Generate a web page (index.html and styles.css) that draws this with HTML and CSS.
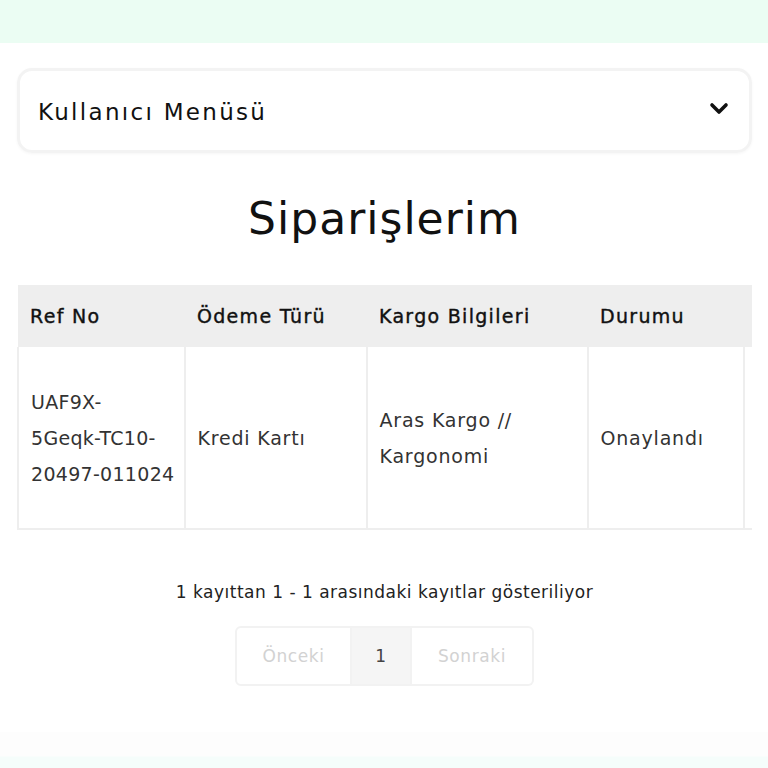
FILE: index.html
```html
<!DOCTYPE html>
<html lang="tr">
<head>
    <meta charset="utf-8">
    <title>Siparişlerim</title>
    <link rel="stylesheet" href="styles.css">
</head>
<body>
    <div class="top-band"></div>

    <div class="page">
        <!-- Kullanici menusu -->
        <div class="user-menu">
            <span class="user-menu-title">Kullanıcı Menüsü</span>
            <svg class="chevron" width="20" height="14" viewBox="0 0 20 14">
                <path d="M3 3 L10 10 L17 3" fill="none" stroke="#111" stroke-width="3.6" stroke-linecap="round" stroke-linejoin="round"/>
            </svg>
        </div>

        <h1 class="page-title">Siparişlerim</h1>

        <!-- Siparis tablosu -->
        <div class="table-wrap">
            <table class="orders">
                <thead>
                    <tr>
                        <th class="col-ref">Ref No</th>
                        <th class="col-pay">Ödeme Türü</th>
                        <th class="col-cargo">Kargo Bilgileri</th>
                        <th class="col-status">Durumu</th>
                        <th class="col-detail"></th>
                    </tr>
                </thead>
                <tbody>
                    <tr>
                        <td>UAF9X-<br>5Geqk-TC10-<br>20497-011024</td>
                        <td>Kredi Kartı</td>
                        <td>Aras Kargo //<br>Kargonomi</td>
                        <td>Onaylandı</td>
                        <td></td>
                    </tr>
                </tbody>
            </table>
        </div>

        <p class="table-info">1 kayıttan 1 - 1 arasındaki kayıtlar gösteriliyor</p>

        <div class="pagination">
            <span class="page-btn disabled">Önceki</span>
            <span class="page-btn current">1</span>
            <span class="page-btn disabled">Sonraki</span>
        </div>
    </div>

    <div class="bottom-band"></div>
</body>
</html>
```

FILE: styles.css
```css
body {
    font-family: 'DejaVu Sans', 'Noto Sans', sans-serif;
    margin: 0;
    background-color: #fff;
    color: #111;
}

.top-band {
    height: 43px;
    background-color: #ebfdf3;
}

.page {
    padding: 25px 16px 0 17px;
    height: 689px;
    box-sizing: border-box;
}

.user-menu {
    display: flex;
    align-items: center;
    justify-content: space-between;
    height: 85px;
    box-sizing: border-box;
    padding: 0 20px 0 18px;
    border: 3px solid #f3f3f3;
    border-radius: 15px;
    box-shadow: 0 1px 3px rgba(0, 0, 0, 0.04);
}

.user-menu-title {
    font-size: 23px;
    letter-spacing: 2.3px;
    padding-top: 2px;
}

.chevron {
    margin-top: -4px;
}

.page-title {
    margin: 36px 0 36px;
    text-align: center;
    font-size: 44px;
    font-weight: 400;
    letter-spacing: 1px;
    line-height: 60px;
}

.table-wrap {
    overflow: hidden;
    width: 735px;
}

.orders {
    border-collapse: collapse;
    width: 860px;
    table-layout: fixed;
    font-size: 19px;
    letter-spacing: 0.8px;
}

.orders th {
    background-color: #eeeeee;
    height: 62px;
    padding: 0 12px;
    text-align: left;
    font-weight: 400;
    letter-spacing: 1.3px;
    color: #111;
    border-right: 1px solid #eeeeee;
    -webkit-text-stroke: 0.4px #111;
}

.orders td {
    height: 181px;
    padding: 0 12px;
    color: #333;
    line-height: 36px;
    white-space: nowrap;
    border: 2px solid #eeeeee;
    border-top: none;
}

.orders td:first-child {
    letter-spacing: 0.3px;
}

.col-ref { width: 142px; }
.col-pay { width: 157px; }
.col-cargo { width: 196px; }
.col-status { width: 131px; }
.col-detail { width: 120px; }

.table-info {
    margin: 52px 0 24px;
    text-align: center;
    font-size: 17px;
    letter-spacing: 0.5px;
    color: #222;
}

.pagination {
    display: flex;
    justify-content: center;
}

.page-btn {
    display: flex;
    align-items: center;
    justify-content: center;
    height: 60px;
    box-sizing: border-box;
    font-size: 17px;
    letter-spacing: 0.6px;
    border: 2px solid #f2f2f2;
}

.page-btn + .page-btn {
    border-left: none;
}

.page-btn:first-child {
    width: 117px;
    border-radius: 6px 0 0 6px;
}

.page-btn:last-child {
    width: 122px;
    border-radius: 0 6px 6px 0;
}

.page-btn.disabled {
    color: #d2d2d2;
}

.page-btn.current {
    width: 60px;
    background-color: #f5f5f5;
    color: #444;
}

.bottom-band {
    height: 36px;
    background: linear-gradient(#fdfdfd, #fdfdfd 24px, #f5fdfb 25px);
}
```
